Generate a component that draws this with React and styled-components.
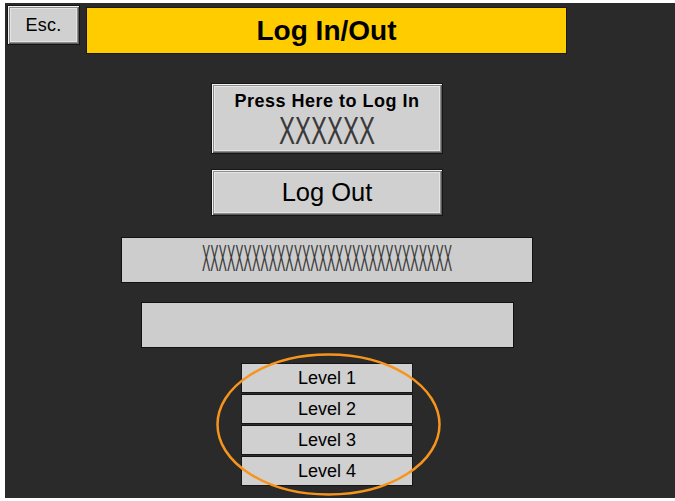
import React from 'react';
import styled, { createGlobalStyle } from 'styled-components';

const Global = createGlobalStyle`
	html, body {
		margin: 0;
		padding: 0;
		background: #ffffff;
	}
	body {
		font-family: 'Liberation Sans', Arial, sans-serif;
	}
`;

const Screen = styled.div`
	position: relative;
	box-sizing: border-box;
	margin: 3px 0 0 5px;
	width: 670px;
	height: 495px;
	padding: 2px 0 0 2px;
	background: #2a2a2a;
	overflow: hidden;
`;

const Content = styled.div`
	width: 640px;
	display: flex;
	flex-direction: column;
	align-items: center;
`;

const Header = styled.div`
	align-self: stretch;
	display: flex;
	align-items: flex-start;
	gap: 6px;
`;

const bevel = `
	box-sizing: border-box;
	background: #d0d0d0;
	border: 1px solid #151515;
	box-shadow: inset 1px 1px 0 #f2f2f2, inset -1px -1px 0 #5a5a5a,
		inset 0 0 0 2px #8c8c8c, inset 0 0 0 3px #e4e4e4;
	color: #000;
	display: flex;
	flex-direction: column;
	align-items: center;
	justify-content: center;
`;

const EscButton = styled.div`
	${bevel}
	width: 73px;
	height: 40px;
	font-size: 18px;
	letter-spacing: 0.3px;
`;

const Title = styled.div`
	box-sizing: border-box;
	margin-top: 2px;
	width: 481px;
	height: 47px;
	background: #ffcc00;
	border: 1px solid #1a1a1a;
	display: flex;
	align-items: center;
	justify-content: center;
	font-size: 28px;
	font-weight: 700;
	color: #000;
	padding-top: 1px;
`;

const PanelButton = styled.div`
	${bevel}
	width: 232px;
	height: ${p => p.$h}px;
	margin-top: ${p => p.$top}px;
`;

const LoginLabel = styled.div`
	font-size: 18px;
	font-weight: 700;
	letter-spacing: 0.5px;
	line-height: 20px;
	margin-top: -4px;
`;

const Mask = styled.div`
	font-family: 'Liberation Sans', Arial, sans-serif;
	font-weight: 400;
	color: #3a3a3a;
	font-size: ${p => p.$size}px;
	letter-spacing: ${p => p.$spacing}px;
	line-height: 1;
	transform: scaleY(${p => p.$stretch});
	white-space: nowrap;
	margin-top: ${p => p.$top || 0}px;
`;

const LogOutLabel = styled.div`
	font-size: 25.5px;
`;

const Field = styled.div`
	box-sizing: border-box;
	width: ${p => p.$w}px;
	height: 46px;
	margin-top: ${p => p.$top}px;
	background: #cdcdcd;
	border: 1px solid #111;
	display: flex;
	align-items: center;
	justify-content: center;
`;

const LevelList = styled.div`
	margin-top: 15px;
	display: flex;
	flex-direction: column;
	gap: 1px;
`;

const LevelButton = styled.div`
	box-sizing: border-box;
	width: 172px;
	height: 30px;
	background: #d0d0d0;
	border: 1px solid #161616;
	display: flex;
	align-items: center;
	justify-content: center;
	font-size: 18px;
	color: #000;
`;

const Highlight = styled.svg`
	position: absolute;
	left: 210px;
	top: 349px;
	pointer-events: none;
`;

const levels = ['Level 1', 'Level 2', 'Level 3', 'Level 4'];

export default function App() {
	return (
		<>
			<Global />
			<Screen>
				<Content>
					<Header>
						<EscButton>Esc.</EscButton>
						<Title>Log In/Out</Title>
					</Header>
					<PanelButton $h={71} $top={29}>
						<LoginLabel>Press Here to Log In</LoginLabel>
						<Mask $size={24} $spacing={0} $stretch={1.6} $top={8}>
							XXXXXX
						</Mask>
					</PanelButton>
					<PanelButton $h={47} $top={15}>
						<LogOutLabel>Log Out</LogOutLabel>
					</PanelButton>
					<Field $w={412} $top={21}>
						<Mask $size={12.5} $spacing={0} $stretch={2.9}>
							XXXXXXXXXXXXXXXXXXXXXXXXXXXXXX
						</Mask>
					</Field>
					<Field $w={373} $top={19} />
					<LevelList>
						{levels.map(level => (
							<LevelButton key={level}>{level}</LevelButton>
						))}
					</LevelList>
				</Content>
				<Highlight width="227" height="145" viewBox="0 0 227 145">
					<ellipse
						cx="113.5"
						cy="72.5"
						rx="111"
						ry="70"
						fill="none"
						stroke="#f7941d"
						strokeWidth="2.5"
					/>
				</Highlight>
			</Screen>
		</>
	);
}
